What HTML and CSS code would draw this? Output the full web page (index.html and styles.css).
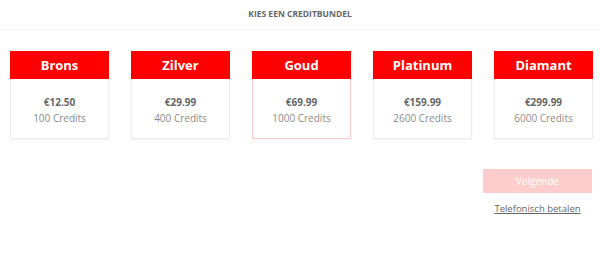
FILE: index.html
```html
<!DOCTYPE html>
<html lang="nl">
<head>
  <meta charset="UTF-8">
  <title>Kies een creditbundel</title>
  <link rel="stylesheet" href="styles.css">
</head>
<body>
  <div class="page-header">Kies een creditbundel</div>

  <div class="bundles">
    <div class="bundle">
      <div class="bundle-name">Brons</div>
      <div class="bundle-body">
        <div class="bundle-price">€12.50</div>
        <div class="bundle-credits">100 Credits</div>
      </div>
    </div>
    <div class="bundle">
      <div class="bundle-name">Zilver</div>
      <div class="bundle-body">
        <div class="bundle-price">€29.99</div>
        <div class="bundle-credits">400 Credits</div>
      </div>
    </div>
    <div class="bundle selected">
      <div class="bundle-name">Goud</div>
      <div class="bundle-body">
        <div class="bundle-price">€69.99</div>
        <div class="bundle-credits">1000 Credits</div>
      </div>
    </div>
    <div class="bundle">
      <div class="bundle-name">Platinum</div>
      <div class="bundle-body">
        <div class="bundle-price">€159.99</div>
        <div class="bundle-credits">2600 Credits</div>
      </div>
    </div>
    <div class="bundle">
      <div class="bundle-name">Diamant</div>
      <div class="bundle-body">
        <div class="bundle-price">€299.99</div>
        <div class="bundle-credits">6000 Credits</div>
      </div>
    </div>
  </div>

  <div class="actions">
    <button class="next-btn" disabled>Volgende</button>
    <a class="phone-link" href="#">Telefonisch betalen</a>
  </div>
</body>
</html>
```

FILE: styles.css
```css
body {
  margin: 0;
  font-family: "Open Sans", "Noto Sans", sans-serif;
  background-color: #ffffff;
  color: #666;
}

.page-header {
  height: 29px;
  line-height: 28px;
  text-align: center;
  text-transform: uppercase;
  font-size: 8.5px;
  font-weight: 700;
  color: #666;
  border-bottom: 1px solid #f4f4f4;
}

.bundles {
  display: flex;
  gap: 22px;
  padding: 21px 0 0 10px;
}

.bundle {
  width: 99px;
  box-sizing: border-box;
  border: 1px solid #ececec;
  border-top: none;
  box-shadow: 0 1px 2px rgba(0, 0, 0, 0.05);
}

.bundle.selected {
  border-color: #f6cccc;
}

.bundle-name {
  height: 28px;
  margin: 0 -1px;
  background-color: #ff0000;
  color: #ffffff;
  font-size: 13px;
  font-weight: 700;
  line-height: 28px;
  text-align: center;
}

.bundle-body {
  height: 59px;
  display: flex;
  flex-direction: column;
  justify-content: center;
  align-items: center;
  gap: 2px;
  padding-top: 2px;
  box-sizing: border-box;
}

.bundle-price {
  font-size: 10px;
  font-weight: 700;
  color: #666;
}

.bundle-credits {
  font-size: 10px;
  color: #8a8a8a;
}

.actions {
  display: flex;
  flex-direction: column;
  align-items: center;
  width: 109px;
  margin: 30px 0 0 auto;
  padding-right: 8px;
  gap: 9px;
}

.next-btn {
  width: 109px;
  height: 24px;
  border: none;
  background-color: #ffcccc;
  color: #ffffff;
  font-family: inherit;
  font-size: 10px;
}

.phone-link {
  font-size: 9.5px;
  color: #666;
  text-decoration: underline;
}
```
